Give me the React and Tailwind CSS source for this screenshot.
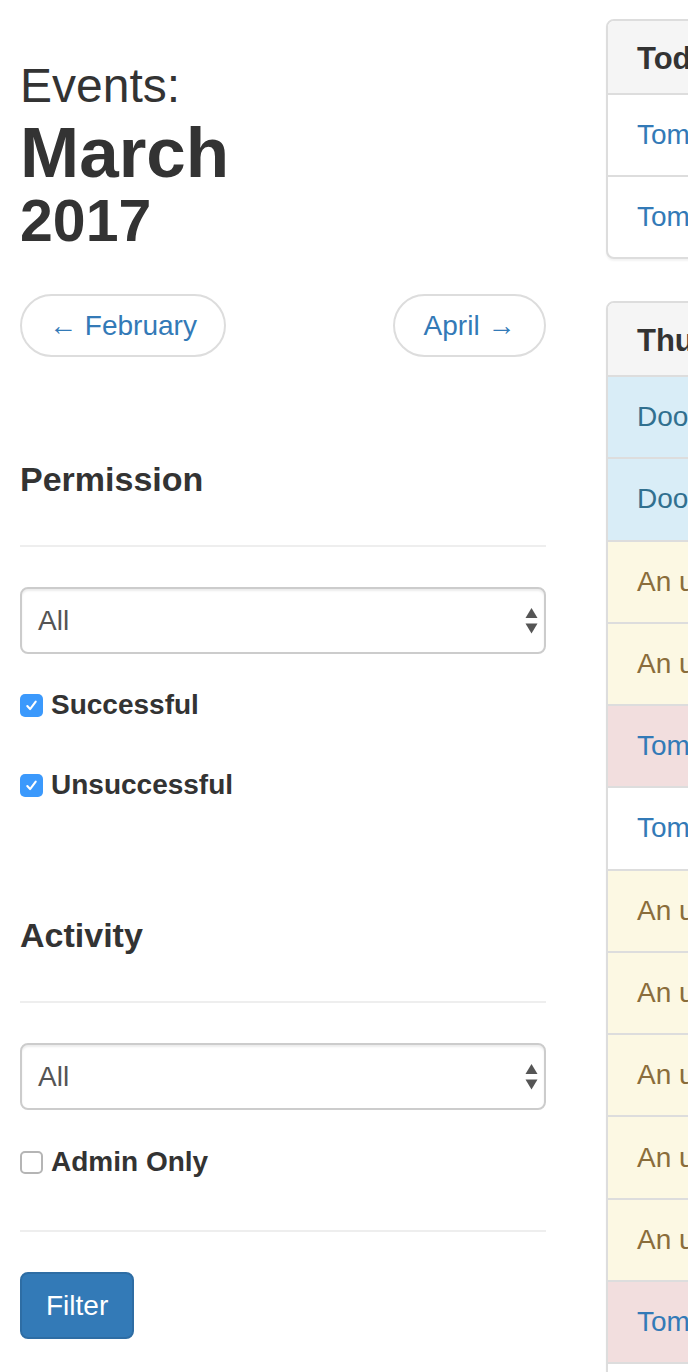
function Check({ checked }) {
  return checked ? (
    <span className="w-[23px] h-[23px] rounded-[5px] bg-[#3b99fc] flex items-center justify-center shrink-0">
      <svg width="15" height="15" viewBox="0 0 16 16" fill="none">
        <path d="M3.5 8.5 L6.5 11.8 L12.5 3.8" stroke="white" strokeWidth="2.2" strokeLinecap="round" strokeLinejoin="round" />
      </svg>
    </span>
  ) : (
    <span className="w-[23px] h-[23px] rounded-[5px] bg-white border-2 border-[#b5b5b5] shrink-0" />
  );
}

function CheckRow({ checked, label, className }) {
  return (
    <div className={"flex items-center gap-[8px] h-[40px] " + className}>
      <Check checked={checked} />
      <span className="text-[28px] font-bold leading-[40px] text-[#333]">{label}</span>
    </div>
  );
}

function Select({ className }) {
  return (
    <div
      className={
        "h-[67px] rounded-[8px] border-2 border-[#ccc] bg-white flex items-center justify-between pl-[16px] pr-[6px] shadow-[inset_0_2px_2px_rgba(0,0,0,0.075)] " +
        className
      }
    >
      <span className="text-[28px] text-[#555]">All</span>
      <svg width="13" height="28" viewBox="0 0 13 28">
        <path d="M6.5 1 L12.5 11 L0.5 11 Z" fill="#555" />
        <path d="M0.5 16.5 L12.5 16.5 L6.5 26.5 Z" fill="#555" />
      </svg>
    </div>
  );
}

function Row({ tone, text, last }) {
  const tones = {
    info: "bg-[#d9edf7] text-[#31708f]",
    warning: "bg-[#fcf8e3] text-[#8a6d3b]",
    danger: "bg-[#f2dede] text-[#337ab7]",
    plain: "bg-white text-[#337ab7]",
  };
  return (
    <div
      className={
        "h-[82.27px] flex items-center px-[29px] text-[28px] whitespace-nowrap " +
        tones[tone] +
        (last ? "" : " border-b-2 border-[#ddd]")
      }
    >
      {text}
    </div>
  );
}

export default function App() {
  const today = [
    { tone: "plain", text: "Tom Anderson unlocked Front Door at 9:14 AM" },
    { tone: "plain", text: "Tom Anderson locked Front Door at 9:02 AM" },
  ];
  const thursday = [
    { tone: "info", text: "Door Front Door was held open" },
    { tone: "info", text: "Door Back Door was held open" },
    { tone: "warning", text: "An unknown card was presented at Front Door" },
    { tone: "warning", text: "An unknown card was presented at Front Door" },
    { tone: "danger", text: "Tom Anderson was denied access to Server Room" },
    { tone: "plain", text: "Tom Anderson unlocked Front Door" },
    { tone: "warning", text: "An unknown card was presented at Back Door" },
    { tone: "warning", text: "An unknown card was presented at Back Door" },
    { tone: "warning", text: "An unknown card was presented at Back Door" },
    { tone: "warning", text: "An unknown card was presented at Back Door" },
    { tone: "warning", text: "An unknown card was presented at Back Door" },
    { tone: "danger", text: "Tom Anderson was denied access to Server Room" },
    { tone: "plain", text: "Tom Anderson unlocked Front Door" },
    { tone: "plain", text: "Tom Anderson locked Front Door" },
  ];

  return (
    <div className="w-[688px] h-[1372px] overflow-hidden bg-white text-[#333] font-['Liberation_Sans',Arial,sans-serif]">
      <div className="flex gap-[60px] pl-[20px]">
        {/* Left column */}
        <div className="w-[526px] shrink-0 pt-[60px] flex flex-col">
          <div className="text-[48px] leading-[52px]">Events:</div>
          <div className="text-[71px] leading-[82px] font-bold">March</div>
          <div className="text-[59px] leading-[54px] font-bold">2017</div>

          <div className="mt-[46px] flex justify-between">
            <button className="w-[206px] h-[63px] rounded-full border-2 border-[#ddd] bg-white text-[#337ab7] text-[28px] flex items-center justify-center">
              ← February
            </button>
            <button className="w-[153px] h-[63px] rounded-full border-2 border-[#ddd] bg-white text-[#337ab7] text-[28px] flex items-center justify-center">
              April →
            </button>
          </div>

          <h4 className="mt-[102px] text-[34px] leading-[40px] font-bold">Permission</h4>
          <div className="mt-[46px] h-[2px] bg-[#eee]" />
          <Select className="mt-[40px]" />
          <CheckRow checked label="Successful" className="mt-[31px]" />
          <CheckRow checked label="Unsuccessful" className="mt-[40px]" />

          <h4 className="mt-[110px] text-[34px] leading-[40px] font-bold">Activity</h4>
          <div className="mt-[46px] h-[2px] bg-[#eee]" />
          <Select className="mt-[40px]" />
          <CheckRow checked={false} label="Admin Only" className="mt-[32px]" />
          <div className="mt-[48px] h-[2px] bg-[#eee]" />

          <div className="mt-[40px]">
            <button className="h-[67px] px-[24px] rounded-[8px] bg-[#337ab7] border-2 border-[#2e6da4] text-white text-[28px]">
              Filter
            </button>
          </div>
        </div>

        {/* Right column */}
        <div className="w-[600px] shrink-0 pt-[19px] flex flex-col">
          <div className="border-2 border-[#ddd] rounded-[8px] overflow-hidden bg-white shadow-[0_2px_2px_rgba(0,0,0,0.05)]">
            <div className="h-[74px] bg-[#f5f5f5] border-b-2 border-[#ddd] flex items-center px-[29px] pt-[4px] text-[31px] leading-[36px] font-bold text-[#333]">
              Today
            </div>
            <div className="h-[82px] flex items-center px-[29px] text-[28px] text-[#337ab7] border-b-2 border-[#ddd] whitespace-nowrap">
              {today[0].text}
            </div>
            <div className="h-[80px] flex items-center px-[29px] text-[28px] text-[#337ab7] whitespace-nowrap">
              {today[1].text}
            </div>
          </div>

          <div className="mt-[42px] border-2 border-[#ddd] rounded-[8px] overflow-hidden bg-white shadow-[0_2px_2px_rgba(0,0,0,0.05)]">
            <div className="h-[74px] bg-[#f5f5f5] border-b-2 border-[#ddd] flex items-center px-[29px] pt-[4px] text-[31px] leading-[36px] font-bold text-[#333] whitespace-nowrap">
              Thursday, March 30
            </div>
            {thursday.map((r, i) => (
              <Row key={i} tone={r.tone} text={r.text} last={i === thursday.length - 1} />
            ))}
          </div>
        </div>
      </div>
    </div>
  );
}
